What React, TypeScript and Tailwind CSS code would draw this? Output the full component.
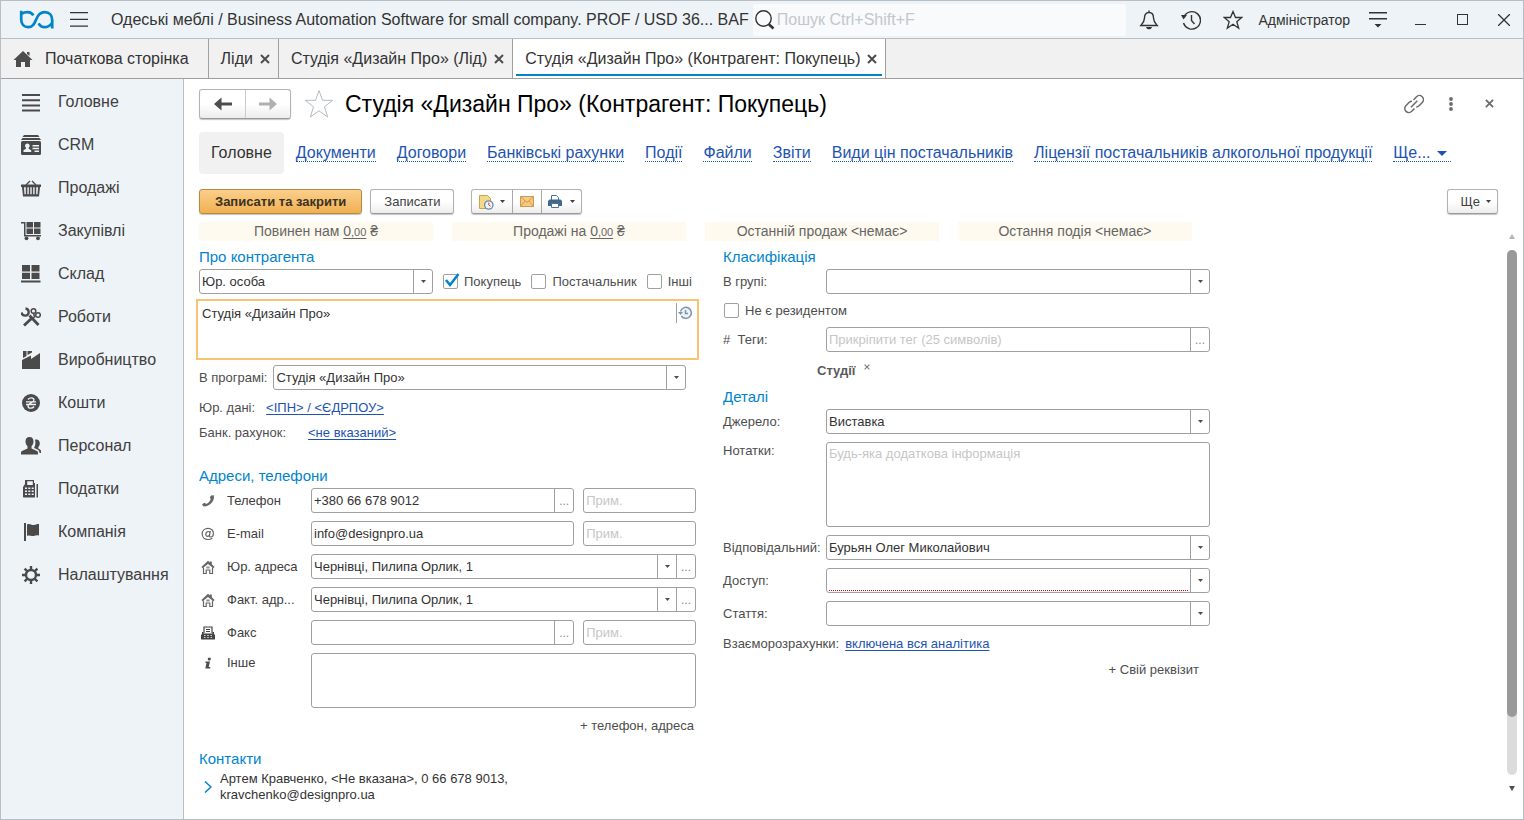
import { useState, type ReactNode } from "react";

interface SvgProps {
  children: ReactNode;
  box?: string;
  className?: string;
}

function Svg({ children, box = "0 0 20 20", className = "size-5" }: SvgProps) {
  return (
    <svg viewBox={box} className={`shrink-0 ${className}`} fill="currentColor" aria-hidden="true">
      {children}
    </svg>
  );
}

function Logo() {
  return (
    <svg viewBox="0 0 36 20" className="h-5 w-9 shrink-0" fill="none" stroke="#0084cb" strokeWidth="2.7" aria-hidden="true">
      <path d="M2.200.800v8.400c0 5.200 3 8 7 8 4.600 0 6.200-3.600 8-7.800 1.900-4.800 4.400-7.200 8.500-7.200 4.900 0 7.500 3.200 7.500 7.800v8.400" />
      <path d="M2.500 3.800c1.700-1.200 4-1.700 6.300-1.700 2.500 0 4.300 1.100 5.600 3.300M19.600 13.400c1.400 2.600 3.400 3.800 6 3.800 3 0 5.300-1.300 7.200-3.900" />
    </svg>
  );
}

const sections = [
  {
    label: "Головне",
    icon: <path d="M1 2h18v2H1zM1 7.300h18v2H1zM1 12.600h18v2H1zM1 17.500h18v2H1z" />,
  },
  {
    label: "CRM",
    icon: (
      <>
        <path d="M3 0h14l1.500 2h-17zM1.500 3h17L20 5H0z" />
        <path
          fillRule="evenodd"
          d="M1.500 6h17A1.500 1.500 0 0 1 20 7.500v11a1.500 1.500 0 0 1-1.500 1.500h-17A1.500 1.500 0 0 1 0 18.500v-11A1.500 1.500 0 0 1 1.500 6zM6.300 8.500a2.300 2.300 0 0 0-1.300 4.200v1.100l-2.500 1.400V17h7.700v-1.800l-2.500-1.400v-1.100a2.300 2.300 0 0 0-1.400-4.200zM11.500 10v1.500H18V10zm0 2.800v1.400H18v-1.400zm2 2.700v1.400H18v-1.400z"
        />
      </>
    ),
  },
  {
    label: "Продажі",
    icon: (
      <>
        <path d="M9 3L5 7M11 3l4 4" stroke="currentColor" strokeWidth="1.300" />
        <path
          fillRule="evenodd"
          d="M0 6.500h20V9h-1l-1 9.500H2L1 9H0zM3 9.200l.5 7h1.300v-7zm3.400 0v7h1.400v-7zm2.900 0v7h1.400v-7zm2.900 0v7h1.400v-7zm3 0v7h1.300l.5-7z"
        />
      </>
    ),
  },
  {
    label: "Закупівлі",
    icon: (
      <>
        <path d="M0 1h4.500v13H20v1.500H3V2.500H0z" />
        <path d="M5.500 1h6.500v5.500H5.500zM13 1h6.500v5.500H13zM5.500 7.500h6.500V13H5.500zM13 7.500h6.500V13H13z" />
        <circle cx="5.500" cy="17.300" r="1.900" />
        <circle cx="17" cy="17.300" r="1.900" />
      </>
    ),
  },
  {
    label: "Склад",
    icon: <path d="M1 1h8v6.500H1zM10.500 1h8v6.500h-8zM1 8.700h8V15H1zM10.500 8.700h8V15h-8zM0 16.500h19.500v2H0z" />,
  },
  {
    label: "Роботи",
    icon: (
      <g fill="none" stroke="currentColor">
        <path d="M8.500 8.500l9 9.500M11 11L3 18.500" strokeWidth="2.800" />
        <path d="M4.500 1.500a3.600 3.600 0 1 1-4 4" strokeWidth="2.300" />
        <circle cx="12.500" cy="4" r="2.300" strokeWidth="1.500" />
        <circle cx="17" cy="8" r="2.300" strokeWidth="1.500" />
        <path d="M12.500 6l1 4L8 14" strokeWidth="1.500" />
      </g>
    ),
  },
  {
    label: "Виробництво",
    icon: <path d="M1 19V10l9-4.500V9l9-6v16zM2 1h3.500v5L2 8zM6.500 1H11v1.500L6.500 5z" />,
  },
  {
    label: "Кошти",
    icon: (
      <>
        <circle cx="10" cy="10" r="9" />
        <path
          d="M7 6.500c1-1.200 2-1.600 3.200-1.600 1.700 0 2.800.8 2.800 2.200 0 3-6 2.600-6 5.800 0 1.400 1.200 2.200 2.900 2.200 1.300 0 2.400-.5 3.200-1.600M5 8.800h10M5 11.500h10"
          fill="none"
          stroke="#eef3f7"
          strokeWidth="1.300"
        />
      </>
    ),
  },
  {
    label: "Персонал",
    icon: (
      <>
        <path d="M8.500 1C5.700 1 4.500 3 4.500 5.500c0 2 .9 3.800 2 4.700v2.300L1 15c-.8.400-1 1.200-1 2v1.500h17V17c0-.8-.3-1.600-1-2l-5.500-2.500v-2.300c1.200-.9 2-2.700 2-4.700C12.500 3 11.300 1 8.500 1z" />
        <path d="M14 3.800c2.700-.8 4.800.8 4.800 3.400 0 1.800-.6 3-1.500 3.900v1.400l1.700 1c.8.500 1 1 1 2V17h-1.500c0-2-1-3-2-3.500L13 12c1.200-2 2-5 1-8.200z" />
      </>
    ),
  },
  {
    label: "Податки",
    icon: (
      <>
        <path
          fillRule="evenodd"
          d="M5 1h8v3h1v14.500H3c-.6 0-1-.4-1-1V8l2-3V1zm1.200 1.300V6h5.600V2.300zM4 8.500V10h2V8.500zm3.300 0V10h2V8.500zm3.400 0V10h2V8.500zM4 11.600V13h2v-1.400zm3.300 0V13h2v-1.400zm3.400 0V13h2v-1.400zM4 14.600V16h2v-1.400zm3.300 0V16h2v-1.400zm3.400 0V16h2v-1.400z"
        />
        <path d="M15.500 5h1.500v13.500h-1.500z" />
      </>
    ),
  },
  {
    label: "Компанія",
    icon: <path d="M3 1h2v18H3zM6 2.500c2.800-1.500 4.500 1 7 .5 1.500-.3 2.500-1 5-1v11.500c-3-1-4.500.5-6.800.5-2 0-3.200-1-5.200 0z" />,
  },
  {
    label: "Налаштування",
    icon: (
      <g fill="none" stroke="currentColor">
        <circle cx="10" cy="10" r="5" strokeWidth="2.400" />
        <path
          d="M10 1v3.500M10 15.500V19M1 10h3.500M15.500 10H19M3.600 3.600l2.500 2.500M13.900 13.900l2.500 2.500M3.600 16.400l2.500-2.500M13.900 6.100l2.500-2.500"
          strokeWidth="2.400"
        />
      </g>
    ),
  },
];

const tabs = ["Ліди", "Студія «Дизайн Про» (Лід)", "Студія «Дизайн Про» (Контрагент: Покупець)"];

const links = [
  "Документи",
  "Договори",
  "Банківські рахунки",
  "Події",
  "Файли",
  "Звіти",
  "Види цін постачальників",
  "Ліцензії постачальників алкогольної продукції",
];

const fieldBox = "flex h-[25px] min-w-0 rounded-[3px] border border-[#a0a0a0] bg-white";
const valueText = "min-w-0 flex-1 bg-transparent pl-[2px] text-[13px] text-[#333] outline-none placeholder:text-[#c6c6c6]";
const flatButton = "border border-[#b3b3b3] border-b-[#9a9a9a] bg-linear-to-b from-white from-50% to-[#ededed] shadow-[0_1px_1px_#c4c4c4]";

function Caret({ className = "h-[3px] w-[5px]" }: { className?: string }) {
  return (
    <svg viewBox="0 0 6 3" className={`shrink-0 ${className}`} fill="currentColor" preserveAspectRatio="none" aria-hidden="true">
      <path d="M0 0h6L3 3z" />
    </svg>
  );
}

function Cross({ className = "size-[10px]" }: { className?: string }) {
  return (
    <svg viewBox="0 0 10 10" className={className} fill="none" stroke="currentColor" strokeWidth="2" aria-hidden="true">
      <path d="M1 1l8 8M9 1L1 9" />
    </svg>
  );
}

interface FieldProps {
  id: string;
  value?: string;
  placeholder?: string;
  more?: boolean;
  misspelt?: boolean;
  className?: string;
}

function MoreButton() {
  return (
    <button type="button" aria-label="Вибрати" className="w-[19px] shrink-0 border-l border-[#a0a0a0] text-[12px] leading-5 text-[#8c8c8c]">
      ...
    </button>
  );
}

function TextField({ id, value = "", placeholder, more, className = "" }: FieldProps) {
  return (
    <div className={`${fieldBox} ${className}`}>
      <input id={id} type="text" defaultValue={value} placeholder={placeholder} aria-label={placeholder} className={valueText} />
      {more && <MoreButton />}
    </div>
  );
}

function SelectField({ id, value = "", more, misspelt, className = "" }: FieldProps) {
  return (
    <div className={`${fieldBox} ${className}`}>
      <div className="relative flex min-w-0 flex-1">
        <select id={id} defaultValue={value} className={`${valueText} appearance-none pr-5`}>
          <option value={value}>{value}</option>
        </select>
        {misspelt && <span className="pointer-events-none absolute right-[21px] bottom-px left-[2px] border-b border-dotted border-[#e00000]" />}
        <span className="pointer-events-none absolute inset-y-0 right-0 flex w-[19px] items-center justify-center border-l border-[#a0a0a0] text-[#4d4d4d]">
          <Caret />
        </span>
      </div>
      {more && <MoreButton />}
    </div>
  );
}

function CheckBox({ label, initial = false }: { label: string; initial?: boolean }) {
  const [checked, setChecked] = useState(initial);

  return (
    <label className="flex items-center gap-[6px] text-[13px] text-[#4d4d4d]">
      <span className="relative flex">
        <input
          type="checkbox"
          checked={checked}
          onChange={() => setChecked(!checked)}
          className="size-[15px] appearance-none rounded-[2px] border border-[#a0a0a0] bg-white"
        />
        {checked && (
          <svg viewBox="0 0 15 15" className="pointer-events-none absolute inset-0 overflow-visible" fill="none" stroke="#0084cb" strokeWidth="2.600" aria-hidden="true">
            <path d="M3 6l4 5 8.500-11" />
          </svg>
        )}
      </span>
      {label}
    </label>
  );
}

function Heading({ children }: { children: ReactNode }) {
  return <h2 className="text-[15px] leading-5 text-[#0084cb]">{children}</h2>;
}

function TitleBar() {
  return (
    <header className="flex h-[38px] items-center border-b border-[#b8bfc4] bg-[#eef3f7] text-[#333]">
      <div className="flex items-center pl-[18px]">
        <Logo />
        <button type="button" aria-label="Меню" className="ml-[15px]">
          <Svg box="0 0 18 15" className="h-[15px] w-[18px]">
            <path d="M0 0h18v1.300H0zM0 6.800h18v1.300H0zM0 13.500h18v1.300H0z" />
          </Svg>
        </button>
      </div>
      <div className="ml-[23px] shrink-0 text-base">
        Одеські меблі / Business Automation Software for small company. PROF / USD 36... BAF
      </div>
      <label className="ml-1 flex h-8 min-w-0 flex-1 items-center rounded-[3px] bg-[#f8fafc] pl-[2px]">
        <Svg className="size-5">
          <circle cx="8.500" cy="8.500" r="7.700" fill="none" stroke="currentColor" strokeWidth="1.400" />
          <path d="M14 14.500l4.500 4" stroke="currentColor" strokeWidth="2.600" />
        </Svg>
        <input
          type="search"
          aria-label="Пошук"
          placeholder="Пошук Ctrl+Shift+F"
          className="ml-[2px] min-w-0 flex-1 bg-transparent text-base outline-none placeholder:text-[#c3c7ca]"
        />
      </label>
      <div className="flex shrink-0 items-center pr-[13px] pl-[13px]">
        <button type="button" aria-label="Сповіщення">
          <Svg>
            <path d="M10 2.500c-3.300 0-4.500 2.300-4.500 5.500 0 3.500-1.500 5-3.700 7.500h16.400C16 13 14.500 11.500 14.500 8c0-3.200-1.200-5.500-4.500-5.500zM10 .5v2" fill="none" stroke="currentColor" strokeWidth="1.400" />
            <path d="M7 17h6c-.5 1.600-1.500 2.300-3 2.300S7.500 18.600 7 17z" />
          </Svg>
        </button>
        <button type="button" aria-label="Історія" className="ml-[22px]">
          <Svg>
            <path d="M3 6.500A8.700 8.700 0 1 1 2.500 13M10.500 5v5.500l3 3.500" fill="none" stroke="currentColor" strokeWidth="1.400" />
            <path d="M0 5h6L2.500 9.500z" />
          </Svg>
        </button>
        <button type="button" aria-label="Вибране" className="ml-[22px]">
          <Svg>
            <path d="M10 1.500l2.500 6h6.300l-5 4.200 1.900 6.500L10 14.300l-5.700 3.900 1.900-6.500-5-4.200h6.300z" fill="none" stroke="currentColor" strokeWidth="1.300" />
          </Svg>
        </button>
        <button type="button" className="ml-[15px] text-sm">
          Адміністратор
        </button>
        <button type="button" aria-label="Сервіс" className="ml-[19px]">
          <Svg box="0 0 18 16" className="h-4 w-[18px]">
            <path d="M0 0h18v1.500H0zM0 6h18v1.500H0zM5.500 12h7L9 15.500z" />
          </Svg>
        </button>
        <button type="button" aria-label="Згорнути" className="ml-7 flex h-[11px] items-end">
          <Svg box="0 0 11 1" className="h-px w-[11px]">
            <path d="M0 0h11v1H0z" />
          </Svg>
        </button>
        <button type="button" aria-label="Розгорнути" className="ml-[31px] size-[11px] border border-[#333]" />
        <button type="button" aria-label="Закрити" className="ml-[30px]">
          <svg viewBox="0 0 12 12" className="size-3" fill="none" stroke="currentColor" strokeWidth="1.300" aria-hidden="true">
            <path d="M0 0l12 12M12 0L0 12" />
          </svg>
        </button>
      </div>
    </header>
  );
}

function TabBar() {
  const current = tabs.length - 1;

  return (
    <div className="flex h-10 border-b border-[#a0a0a0] bg-[#f1f1f1] text-base text-[#333]">
      <button type="button" className="flex items-center border-r border-[#a0a0a0] pr-[19px] pl-[12px]">
        <Svg className="size-5 text-[#4d4d4d]">
          <path d="M10 2l9.500 9H17v7h-5v-5H8v5H3v-7H.5zM14 3h2.500v4L14 5z" />
        </Svg>
        <span className="ml-3">Початкова сторінка</span>
      </button>
      {tabs.map((tab, i) => (
        <div key={tab} className={`relative flex items-center gap-[7px] border-r border-[#a0a0a0] pr-2 pl-3 ${i === current ? "bg-white" : ""}`}>
          <button type="button">{tab}</button>
          <button type="button" aria-label={`Закрити ${tab}`} className="text-[#4d4d4d]">
            <Cross />
          </button>
          {i === current && <span className="absolute inset-x-[3px] bottom-[2px] h-[2px] bg-[#0084cb]" />}
        </div>
      ))}
    </div>
  );
}

function Sidebar() {
  return (
    <nav className="w-[183px] shrink-0 border-r border-[#b8bfc4] bg-[#eef3f7] pt-px">
      {sections.map(({ label, icon }) => (
        <a key={label} href="#" className="flex h-[43px] items-center gap-[17px] pl-5 text-base text-[#404040]">
          <Svg className="size-5 text-[#4a4a4a]">{icon}</Svg>
          {label}
        </a>
      ))}
    </nav>
  );
}

function FormHeader() {
  return (
    <div className="mt-[9px] flex h-[31px] items-center">
      <div className={`flex h-[30px] rounded-[3px] ${flatButton}`}>
        <button type="button" aria-label="Назад" className="flex w-[46px] items-center justify-center border-r border-[#ccc] text-[#4d4d4d]">
          <Svg box="0 0 18 14" className="h-[14px] w-[18px]">
            <path d="M0 7l7.500-6.500v5H18v3H7.500v5z" />
          </Svg>
        </button>
        <button type="button" aria-label="Вперед" className="flex w-[44px] items-center justify-center text-[#b0b0b0]">
          <Svg box="0 0 18 14" className="h-[14px] w-[18px]">
            <path d="M18 7L10.500.5v5H0v3h10.500v5z" />
          </Svg>
        </button>
      </div>
      <button type="button" aria-label="Додати до вибраного" className="ml-[13px] text-[#b4bac0]">
        <Svg box="0 0 30 30" className="size-[30px]">
          <path d="M15 1.500l3.500 9.800h10.200l-8.200 6.500 3.200 10.200L15 21.800 6.300 28l3.200-10.200-8.200-6.500h10.200z" fill="none" stroke="currentColor" />
        </Svg>
      </button>
      <h1 className="ml-[11px] flex-1 text-[23px] leading-7 whitespace-nowrap text-black">Студія «Дизайн Про» (Контрагент: Покупець)</h1>
      <div className="flex items-center pr-[29px] text-[#6b6b6b]">
        <button type="button" aria-label="Посилання">
          <Svg>
            <path
              d="M9.500 6l3-3.200a4 4 0 0 1 5.800 5.600l-3.300 3.400a4 4 0 0 1-2.800 1.100M10.500 14.500l-2.800 2.800a4 4 0 0 1-5.800-5.600l3.300-3.400A4 4 0 0 1 8 7.200M7 13.300l6.300-6.600"
              fill="none"
              stroke="currentColor"
              strokeWidth="1.500"
            />
          </Svg>
        </button>
        <button type="button" aria-label="Додатково" className="ml-[24px]">
          <Svg box="0 0 6 14" className="h-[14px] w-[6px]">
            <circle cx="3" cy="2" r="1.900" />
            <circle cx="3" cy="7" r="1.900" />
            <circle cx="3" cy="12" r="1.900" />
          </Svg>
        </button>
        <button type="button" aria-label="Закрити форму" className="ml-[31px]">
          <Cross className="size-[9px]" />
        </button>
      </div>
    </div>
  );
}

function FormLinks() {
  return (
    <nav className="mt-[13px] flex h-[42px] items-center text-base whitespace-nowrap text-[#1d54b1]">
      <a href="#" className="mr-3 flex h-full items-center rounded-[4px] bg-[#f1f1f1] px-3 text-[#333]">
        Головне
      </a>
      <div className="flex items-center gap-[21px]">
        {links.map((link) => (
          <a key={link} href="#" className="border-b border-dotted border-[#1d54b1] pt-px leading-4">
            {link}
          </a>
        ))}
        <a href="#" className="flex items-center gap-[6px] border-b border-dotted border-[#1d54b1] pt-px pr-1 leading-4">
          Ще...
          <Caret className="h-[5px] w-[10px]" />
        </a>
      </div>
    </nav>
  );
}

function CommandBar() {
  return (
    <div className="mt-[15px] flex h-[25px] text-[13px] text-[#404040]">
      <button
        type="submit"
        className="rounded-[3px] border border-[#b68a43] bg-linear-to-b from-[#fbcf8b] to-[#f0b050] px-[15px] font-bold text-[#3a3222] shadow-[0_1px_1px_#c4c4c4]"
      >
        Записати та закрити
      </button>
      <button type="button" className={`ml-2 rounded-[3px] px-[13px] ${flatButton}`}>
        Записати
      </button>
      <div className={`ml-[17px] flex rounded-[3px] ${flatButton}`}>
        <button type="button" aria-label="Створити на підставі" className="flex w-[41px] items-center gap-[6px] border-r border-[#a8a8a8] pl-[6px]">
          <Svg box="0 0 16 16" className="size-4">
            <path d="M1.500 1.500h8l3 3v10h-11z" fill="#f3d988" stroke="#c9a54a" />
            <circle cx="10.800" cy="11" r="4.200" fill="#eef4fa" stroke="#6b8bab" strokeWidth="1.300" />
            <path d="M10.800 8.500V11l1.800 1.300" fill="none" stroke="#d3433a" />
          </Svg>
          <Caret />
        </button>
        <button type="button" aria-label="Надіслати" className="flex w-[29px] items-center justify-center border-r border-[#a8a8a8]">
          <Svg box="0 0 14 11" className="h-[11px] w-[14px]">
            <path d="M.5.500h13v10H.5z" fill="#f6cb80" stroke="#cf9a4c" />
            <path d="M.5.500L7 6.500l6.500-6M.5 10.500L5 5M13.500 10.500L9 5" fill="none" stroke="#cf9a4c" />
          </Svg>
        </button>
        <button type="button" aria-label="Друк" className="flex w-[39px] items-center gap-2 pl-[6px]">
          <Svg box="0 0 14 13" className="h-[13px] w-[14px]">
            <path d="M3.500.500h5l2 2v3h-7z" fill="#fff" stroke="#4f7192" />
            <path d="M1.500 4.500h11L14 6v5H0V6z" fill="#40688f" />
            <path d="M3.500 8.500h7v4h-7z" fill="#fff" stroke="#4f7192" />
          </Svg>
          <Caret />
        </button>
      </div>
      <button type="button" className={`mr-[25px] ml-auto flex w-[51px] items-center justify-end gap-[6px] rounded-[3px] pr-[6px] ${flatButton}`}>
        Ще
        <Caret />
      </button>
    </div>
  );
}

function Amount() {
  return (
    <a href="#" className="underline underline-offset-2">
      0<span className="text-[11px]">,00</span>
    </a>
  );
}

function Summary() {
  const cells: ReactNode[] = [
    <>Повинен нам <Amount /> ₴</>,
    <>Продажі на <Amount /> ₴</>,
    "Останній продаж <немає>",
    "Остання подія <немає>",
  ];

  return (
    <div className="grid max-w-[993px] grid-cols-4 gap-[19px] text-center text-sm leading-[18px] text-[#666]">
      {cells.map((cell, i) => (
        <div key={i} className="bg-[#fffaef]">
          {cell}
        </div>
      ))}
    </div>
  );
}

interface ContactRowProps {
  icon: ReactNode;
  label: string;
  id: string;
  children: ReactNode;
}

function ContactRow({ icon, label, id, children }: ContactRowProps) {
  return (
    <div className="flex items-start">
      <span className="flex h-[25px] w-7 items-center pl-[2px] text-[#666]">
        <Svg box="0 0 14 14" className="size-[14px]">
          {icon}
        </Svg>
      </span>
      <label htmlFor={id} className="w-[84px] shrink-0 leading-[25px] text-[#404040]">
        {label}
      </label>
      <div className="flex min-w-0 flex-1 gap-[9px]">{children}</div>
    </div>
  );
}

const houseIcon = (
  <>
    <path d="M7 .8l1.800 1.600V1.500h2v2.700L13.600 7l-1.200 1.300L7 3.900 1.600 8.300.4 7z" />
    <path d="M2.500 7.500v6h2.700V10h3.600v3.500h2.700v-6" fill="none" stroke="currentColor" strokeWidth="1.200" />
    <path d="M5.300 6.500h3.400v2H5.300z" fillOpacity=".7" />
  </>
);

function ContactInfo() {
  return (
    <div className="flex flex-col gap-2">
      <ContactRow
        id="phone"
        label="Телефон"
        icon={<path d="M10 1.500l2.800-.3c1.200 5-3.300 11.300-10.300 11.300L1 10.200l2.500-1.500 1.900 1.200c2.200-1 3.600-2.800 4.300-5L8.800 3.500z" />}
      >
        <TextField id="phone" value="+380 66 678 9012" more className="flex-[264]" />
        <TextField id="phone-note" placeholder="Прим." className="flex-[112]" />
      </ContactRow>
      <ContactRow
        id="email"
        label="E-mail"
        icon={
          <path
            d="M9.300 4L8.500 8.300c-.2 1.300.3 1.700 1.200 1.700 1.500 0 2.700-1.600 2.700-3.700C12.400 3.400 10.200 1.300 7 1.300 3.600 1.300 1.200 3.700 1.200 7s2.400 5.500 5.800 5.500c1.700 0 3-.4 4.300-1.300M8.900 6.300c0-1.200-.7-1.800-1.600-1.800-1.500 0-2.500 1.500-2.500 3.100 0 1.100.6 1.800 1.500 1.800 1.500 0 2.500-1.600 2.600-3.100z"
            fill="none"
            stroke="currentColor"
            strokeWidth="1.200"
          />
        }
      >
        <TextField id="email" value="info@designpro.ua" className="flex-[264]" />
        <TextField id="email-note" placeholder="Прим." className="flex-[112]" />
      </ContactRow>
      <ContactRow id="legal-address" label="Юр. адреса" icon={houseIcon}>
        <SelectField id="legal-address" value="Чернівці, Пилипа Орлик, 1" more className="flex-1" />
      </ContactRow>
      <ContactRow id="actual-address" label="Факт. адр..." icon={houseIcon}>
        <SelectField id="actual-address" value="Чернівці, Пилипа Орлик, 1" more className="flex-1" />
      </ContactRow>
      <ContactRow
        id="fax"
        label="Факс"
        icon={
          <g className="text-[#444]">
            <path d="M3 7V1h8v6M5 3.500h4M5 5.500h4" fill="none" stroke="currentColor" strokeWidth="1.200" />
            <path fillRule="evenodd" d="M1 6h1.500v1.500h9V6H13v2l1 1v4.500H0V9l1-1zM3 9.300v.8h1.500v-.8zm3.200 0v.8h1.600v-.8zm3.300 0v.8H11v-.8zM3 11.300v.8h1.500v-.8zm3.200 0v.8h1.600v-.8zm3.300 0v.8H11v-.8z" />
          </g>
        }
      >
        <TextField id="fax" more className="flex-[264]" />
        <TextField id="fax-note" placeholder="Прим." className="flex-[112]" />
      </ContactRow>
      <div className="flex items-start">
        <span className="flex h-5 w-7 items-center pl-[2px] text-[#4d4d4d]">
          <Svg box="0 0 14 14" className="size-[14px]">
            <circle cx="8.300" cy="3" r="1.600" />
            <path d="M4.500 5.500H9L7.700 11h1.600v1.500H4.300L5.500 7h-1z" />
          </Svg>
        </span>
        <label htmlFor="other" className="w-[84px] shrink-0 leading-5 text-[#404040]">
          Інше
        </label>
        <textarea id="other" className="h-[55px] min-w-0 flex-1 resize-none rounded-[3px] border border-[#a0a0a0] px-[2px] outline-none" />
      </div>
    </div>
  );
}

function LeftColumn() {
  return (
    <div className="min-w-0">
      <Heading>Про контрагента</Heading>
      <div className="mt-[2px] flex items-center gap-[10px]">
        <SelectField id="kind" value="Юр. особа" className="w-[234px]" />
        <CheckBox label="Покупець" initial />
        <CheckBox label="Постачальник" />
        <CheckBox label="Інші" />
      </div>
      <div className="-mx-[3px] mt-[5px] flex h-[61px] items-start border-2 border-[#f8c471] pt-[2px] pr-[5px]">
        <textarea
          aria-label="Найменування"
          defaultValue="Студія «Дизайн Про»"
          className="h-[50px] min-w-0 flex-1 resize-none bg-transparent px-1 pt-px leading-5 text-[#333] outline-none"
        />
        <button type="button" aria-label="Історія змін" className="flex h-5 items-center border-l border-[#a0a0a0] pl-px text-[#7c96ab]">
          <Svg box="0 0 14 14" className="size-[14px]">
            <circle cx="8" cy="7" r="5.300" fill="#eef2f5" />
            <path d="M2.500 5.500A5.500 5.500 0 1 1 3.300 10M7.500 4v3.500H10" fill="none" stroke="currentColor" strokeWidth="1.500" />
            <path d="M0 6h5L2.500 9z" />
          </Svg>
        </button>
      </div>
      <div className="mt-[5px] mr-[10px] flex items-center gap-[6px]">
        <label htmlFor="program-name">В програмі:</label>
        <SelectField id="program-name" value="Студія «Дизайн Про»" className="flex-1" />
      </div>
      <div className="mt-2 flex gap-[11px] leading-5">
        <span>Юр. дані:</span>
        <a href="#" className="text-[#1d54b1] underline underline-offset-2">
          &lt;ІПН&gt; / &lt;ЄДРПОУ&gt;
        </a>
      </div>
      <div className="mt-[5px] flex gap-[22px] leading-5">
        <span>Банк. рахунок:</span>
        <a href="#" className="text-[#1d54b1] underline underline-offset-2">
          &lt;не вказаний&gt;
        </a>
      </div>
      <div className="mt-[23px]">
        <Heading>Адреси, телефони</Heading>
      </div>
      <div className="mt-[2px]">
        <ContactInfo />
      </div>
      <button type="button" className="mt-2 mr-[2px] ml-auto block leading-5">
        + телефон, адреса
      </button>
      <div className="mt-[13px]">
        <Heading>Контакти</Heading>
      </div>
      <div className="mt-[2px] flex items-center text-[#333]">
        <button type="button" aria-label="Розгорнути контакт" className="w-[21px] shrink-0 pl-[5px] text-[#0084cb]">
          <Svg box="0 0 8 12" className="h-3 w-2">
            <path d="M1 .500l6 5.500-6 5.500" fill="none" stroke="currentColor" strokeWidth="1.500" />
          </Svg>
        </button>
        <p className="leading-4">
          Артем Кравченко, &lt;Не вказана&gt;, 0 66 678 9013,
          <br />
          kravchenko@designpro.ua
        </p>
      </div>
    </div>
  );
}

function LabelledRow({ id, label, children }: { id: string; label: string; children: ReactNode }) {
  return (
    <div className="flex items-start">
      <label htmlFor={id} className="w-[103px] shrink-0 leading-[25px] whitespace-pre">
        {label}
      </label>
      {children}
    </div>
  );
}

function RightColumn() {
  return (
    <div className="min-w-0">
      <Heading>Класифікація</Heading>
      <div className="mt-[2px]">
        <LabelledRow id="group" label="В групі:">
          <SelectField id="group" className="flex-1" />
        </LabelledRow>
      </div>
      <div className="flex h-[33px] items-center pl-px">
        <CheckBox label="Не є резидентом" />
      </div>
      <LabelledRow id="tags" label="#  Теги:">
        <TextField id="tags" placeholder="Прикріпити тег (25 символів)" more className="flex-1" />
      </LabelledRow>
      <div className="mt-[9px] flex gap-2 pl-[94px] leading-5">
        <b className="text-[#5a5a5a]">Студії</b>
        <button type="button" aria-label="Видалити тег" className="h-3 text-[#808080]">
          <Cross className="size-[6px]" />
        </button>
      </div>
      <div className="mt-[6px]">
        <Heading>Деталі</Heading>
      </div>
      <div className="mt-[2px] flex flex-col gap-2">
        <LabelledRow id="source" label="Джерело:">
          <SelectField id="source" value="Виставка" className="flex-1" />
        </LabelledRow>
        <div className="flex items-start">
          <label htmlFor="notes" className="w-[103px] shrink-0 leading-[18px]">
            Нотатки:
          </label>
          <textarea
            id="notes"
            placeholder="Будь-яка додаткова інформація"
            className="h-[85px] min-w-0 flex-1 resize-none rounded-[3px] border border-[#a0a0a0] px-[2px] py-px leading-5 outline-none placeholder:text-[#c6c6c6]"
          />
        </div>
        <LabelledRow id="responsible" label="Відповідальний:">
          <SelectField id="responsible" value="Бурьян Олег Миколайович" className="flex-1" />
        </LabelledRow>
        <LabelledRow id="access" label="Доступ:">
          <SelectField id="access" misspelt className="flex-1" />
        </LabelledRow>
        <LabelledRow id="article" label="Стаття:">
          <SelectField id="article" className="flex-1" />
        </LabelledRow>
      </div>
      <div className="mt-2 flex gap-[6px] leading-5">
        <span>Взаєморозрахунки:</span>
        <a href="#" className="text-[#1d54b1] underline underline-offset-2">
          включена вся аналітика
        </a>
      </div>
      <button type="button" className="mt-[6px] mr-[11px] ml-auto block leading-5">
        + Свій реквізит
      </button>
    </div>
  );
}

function ScrollBar() {
  return (
    <div className="mr-[6px] mb-[28px] flex w-[10px] shrink-0 flex-col items-center pt-3">
      <Svg box="0 0 6 5" className="h-[5px] w-[6px] text-[#b4b4b4]">
        <path d="M3 0l3 5H0z" />
      </Svg>
      <div className="mt-[11px] w-full flex-1 rounded-full bg-[#dcdcdc]">
        <div className="h-[89%] rounded-full bg-[#999]" />
      </div>
      <Svg box="0 0 6 5" className="mt-[11px] h-[5px] w-[6px] text-[#4d4d4d]">
        <path d="M0 0h6L3 5z" />
      </Svg>
    </div>
  );
}

export default function App() {
  return (
    <div className="flex min-h-screen flex-col border border-[#b8bfc4] bg-white font-['Liberation_Sans',Arial,sans-serif]">
      <TitleBar />
      <TabBar />
      <div className="flex flex-1">
        <Sidebar />
        <main className="flex min-w-0 flex-1 flex-col pl-[15px]">
          <FormHeader />
          <FormLinks />
          <CommandBar />
          <div className="mt-2 flex flex-1">
            <div className="min-w-0 flex-1">
              <Summary />
              <form className="mt-[6px] grid max-w-[1011px] grid-cols-[497fr_487fr] gap-[27px] text-[13px] text-[#4d4d4d]">
                <LeftColumn />
                <RightColumn />
              </form>
            </div>
            <ScrollBar />
          </div>
        </main>
      </div>
    </div>
  );
}
